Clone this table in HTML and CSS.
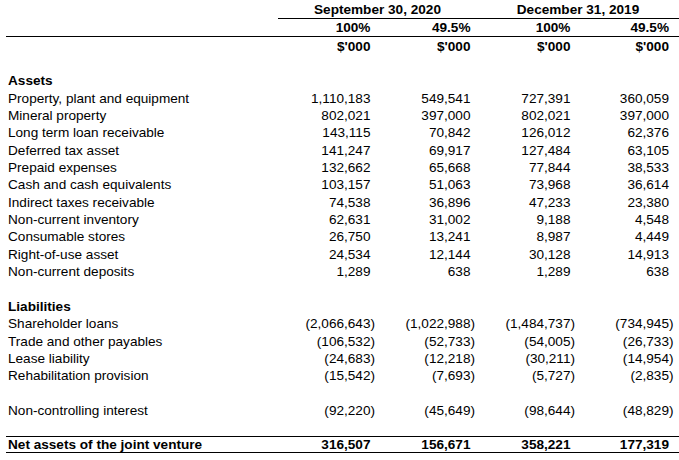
FILE: index.html
```html
<!DOCTYPE html>
<html>
<head>
<meta charset="utf-8">
<link rel="stylesheet" href="styles.css">
</head>
<body>
<div class="sheet">
  <div class="row">
    <div></div>
    <div class="span b hdr-line">September 30, 2020</div>
    <div class="span b hdr-line">December 31, 2019</div>
  </div>
  <div class="row rule-b b">
    <div></div><div class="n p">100%</div><div class="n p">49.5%</div><div class="n p">100%</div><div class="n p last">49.5%</div>
  </div>
  <div class="row b">
    <div></div><div class="n p">$'000</div><div class="n p">$'000</div><div class="n p">$'000</div><div class="n p last">$'000</div>
  </div>
  <div class="row"></div>
  <div class="row b"><div class="lbl">Assets</div></div>
  <div class="row"><div class="lbl">Property, plant and equipment</div><div class="n p">1,110,183</div><div class="n p">549,541</div><div class="n p">727,391</div><div class="n p last">360,059</div></div>
  <div class="row"><div class="lbl">Mineral property</div><div class="n p">802,021</div><div class="n p">397,000</div><div class="n p">802,021</div><div class="n p last">397,000</div></div>
  <div class="row"><div class="lbl">Long term loan receivable</div><div class="n p">143,115</div><div class="n p">70,842</div><div class="n p">126,012</div><div class="n p last">62,376</div></div>
  <div class="row"><div class="lbl">Deferred tax asset</div><div class="n p">141,247</div><div class="n p">69,917</div><div class="n p">127,484</div><div class="n p last">63,105</div></div>
  <div class="row"><div class="lbl">Prepaid expenses</div><div class="n p">132,662</div><div class="n p">65,668</div><div class="n p">77,844</div><div class="n p last">38,533</div></div>
  <div class="row"><div class="lbl">Cash and cash equivalents</div><div class="n p">103,157</div><div class="n p">51,063</div><div class="n p">73,968</div><div class="n p last">36,614</div></div>
  <div class="row"><div class="lbl">Indirect taxes receivable</div><div class="n p">74,538</div><div class="n p">36,896</div><div class="n p">47,233</div><div class="n p last">23,380</div></div>
  <div class="row"><div class="lbl">Non-current inventory</div><div class="n p">62,631</div><div class="n p">31,002</div><div class="n p">9,188</div><div class="n p last">4,548</div></div>
  <div class="row"><div class="lbl">Consumable stores</div><div class="n p">26,750</div><div class="n p">13,241</div><div class="n p">8,987</div><div class="n p last">4,449</div></div>
  <div class="row"><div class="lbl">Right-of-use asset</div><div class="n p">24,534</div><div class="n p">12,144</div><div class="n p">30,128</div><div class="n p last">14,913</div></div>
  <div class="row"><div class="lbl">Non-current deposits</div><div class="n p">1,289</div><div class="n p">638</div><div class="n p">1,289</div><div class="n p last">638</div></div>
  <div class="row"></div>
  <div class="row b"><div class="lbl">Liabilities</div></div>
  <div class="row"><div class="lbl">Shareholder loans</div><div class="n">(2,066,643)</div><div class="n">(1,022,988)</div><div class="n">(1,484,737)</div><div class="n last">(734,945)</div></div>
  <div class="row"><div class="lbl">Trade and other payables</div><div class="n">(106,532)</div><div class="n">(52,733)</div><div class="n">(54,005)</div><div class="n last">(26,733)</div></div>
  <div class="row"><div class="lbl">Lease liability</div><div class="n">(24,683)</div><div class="n">(12,218)</div><div class="n">(30,211)</div><div class="n last">(14,954)</div></div>
  <div class="row"><div class="lbl">Rehabilitation provision</div><div class="n">(15,542)</div><div class="n">(7,693)</div><div class="n">(5,727)</div><div class="n last">(2,835)</div></div>
  <div class="row"></div>
  <div class="row"><div class="lbl">Non-controlling interest</div><div class="n">(92,220)</div><div class="n">(45,649)</div><div class="n">(98,644)</div><div class="n last">(48,829)</div></div>
  <div class="row"></div>
  <div class="row b rule-t rule-b"><div class="lbl">Net assets of the joint venture</div><div class="n p">316,507</div><div class="n p">156,671</div><div class="n p">358,221</div><div class="n p last">177,319</div></div>
</div>
</body>
</html>
```
FILE: styles.css
```css
html, body {
  margin: 0;
  padding: 0;
  background: #fff;
}
.sheet {
  margin: 2px 0 0 6px;
  width: 673px;
  font-family: "Liberation Sans", Arial, sans-serif;
  font-size: 13.6px;
  color: #000;
}
.row {
  display: grid;
  grid-template-columns: 272px 99px 100px 100px 102px;
  height: 17.35px;
  line-height: 17.35px;
  padding-top: 1px;
  box-sizing: border-box;
  white-space: nowrap;
}
.b {
  font-weight: bold;
}
.lbl {
  padding-left: 2px;
}
.span {
  grid-column: span 2;
  text-align: center;
  box-sizing: border-box;
  margin-top: -1px;
}
.hdr-line {
  border-bottom: 1px solid #000;
  height: 17.35px;
  line-height: 16.5px;
}
.rule-b {
  border-bottom: 1px solid #000;
  line-height: 15.5px;
}
.rule-t {
  border-top: 1px solid #000;
  line-height: 14.5px;
}
.n {
  text-align: right;
  padding-right: 2px;
}
.n.last {
  padding-right: 5.5px;
}
.p::after {
  content: ")";
  visibility: hidden;
}
```
